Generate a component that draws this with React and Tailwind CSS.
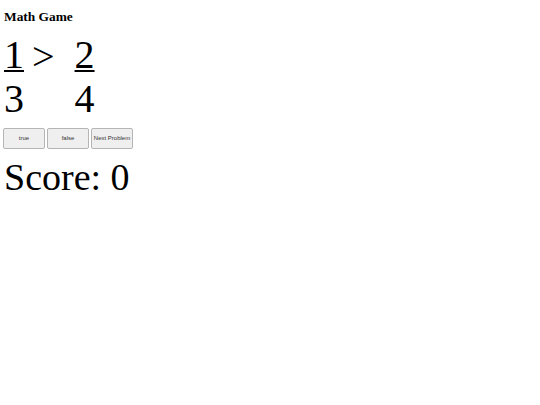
export default function App() {
  return (
    <div className="px-1 pt-2 text-black" style={{ fontFamily: '"Liberation Serif", serif' }}>
      <h3 className="text-[13.4px] font-bold leading-[18px]">Math Game</h3>
      <div className="mt-[9px] flex items-start text-[40px] leading-[40px]">
        <div className="flex flex-col">
          <span className="underline decoration-2 underline-offset-2">1</span>
          <span className="mt-[4px]">3</span>
        </div>
        <span className="ml-[8px] mt-[2px]">&gt;</span>
        <div className="ml-[20px] flex flex-col">
          <span className="underline decoration-2 underline-offset-2">2</span>
          <span className="mt-[4px]">4</span>
        </div>
      </div>
      <div className="-ml-px mt-[9px] flex gap-[2px]" style={{ fontFamily: '"Liberation Sans", sans-serif' }}>
        {['true', 'false', 'Next Problem'].map((t) => (
          <button
            key={t}
            className="h-[21px] w-[42px] rounded-[2px] border border-[#b5b5b5] bg-[#efefef] text-[6px] text-[#333]"
          >
            {t}
          </button>
        ))}
      </div>
      <div className="mt-[6px] text-[38px] leading-[44px]">Score: 0</div>
    </div>
  );
}
